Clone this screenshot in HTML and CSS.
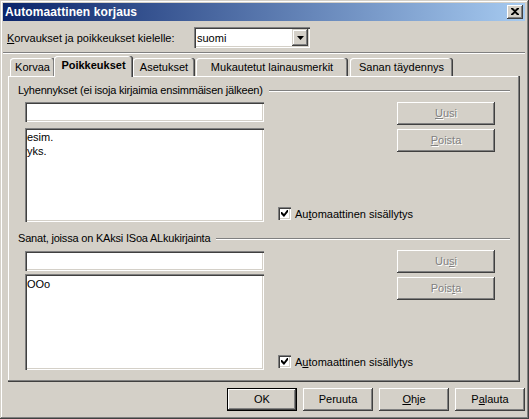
FILE: index.html
```html
<!DOCTYPE html>
<html lang="fi">
<head>
<meta charset="utf-8">
<title>Automaattinen korjaus</title>
<link rel="stylesheet" href="styles.css">
</head>
<body>
<div class="window">
  <div class="titlebar">
    <span class="title">Automaattinen korjaus</span>
    <span class="close">
      <svg width="8" height="7" viewBox="0 0 8 7"><path d="M0 0h2l2 2 2-2h2v1L5 3.5 8 6v1H6L4 5 2 7H0V6l3-2.5L0 1z" fill="#000"/></svg>
    </span>
  </div>
  <div class="langrow">
    <span class="langlabel"><u>K</u>orvaukset ja poikkeukset kielelle:</span>
    <div class="combo">
      <span class="combotext">suomi</span>
      <span class="dropbtn"><svg width="7" height="4" viewBox="0 0 7 4"><path d="M0 0h7L3.5 4z" fill="#000"/></svg></span>
    </div>
  </div>
  <div class="sep"></div>
  <div class="tabs">
    <div class="tab t-korvaa">Korvaa</div>
    <div class="tab sel t-poik">Poikkeukset</div>
    <div class="tab t-aset">Asetukset</div>
    <div class="tab t-muk">Mukautetut lainausmerkit</div>
    <div class="tab t-san">Sanan täydennys</div>
  </div>
  <div class="panel">
    <div class="group">
      <div class="ghead"><span class="gtext">Lyhennykset (ei isoja kirjaimia ensimmäisen jälkeen)</span><span class="gline"></span></div>
      <div class="gbody g1">
        <div class="lcol">
          <div class="field"></div>
          <div class="list list1"><div class="item">esim.</div><div class="item">yks.</div></div>
        </div>
        <div class="mcol">
          <div class="check"><span class="box"><svg width="7" height="7" viewBox="0 0 7 7"><path d="M0 2h1l2 2 3-4h1v2L3 7 0 4z" fill="#000"/></svg></span><span class="ctext">Au<u>t</u>omaattinen sisällytys</span></div>
        </div>
        <div class="rcol">
          <div class="btn dis"><span><u>U</u>usi</span></div>
          <div class="btn dis"><span><u>P</u>oista</span></div>
        </div>
      </div>
    </div>
    <div class="group group2">
      <div class="ghead"><span class="gtext">Sanat, joissa on KAksi ISoa ALkukirjainta</span><span class="gline"></span></div>
      <div class="gbody g2">
        <div class="lcol">
          <div class="field"></div>
          <div class="list list2"><div class="item">OOo</div></div>
        </div>
        <div class="mcol">
          <div class="check"><span class="box"><svg width="7" height="7" viewBox="0 0 7 7"><path d="M0 2h1l2 2 3-4h1v2L3 7 0 4z" fill="#000"/></svg></span><span class="ctext">A<u>u</u>tomaattinen sisällytys</span></div>
        </div>
        <div class="rcol">
          <div class="btn dis"><span>Uu<u>s</u>i</span></div>
          <div class="btn dis"><span>Pois<u>t</u>a</span></div>
        </div>
      </div>
    </div>
  </div>
  <div class="btnrow">
    <div class="btn wide def"><span>OK</span></div>
    <div class="btn wide"><span>Peruuta</span></div>
    <div class="btn wide"><span><u>O</u>hje</span></div>
    <div class="btn wide"><span>P<u>a</u>lauta</span></div>
  </div>
</div>
</body>
</html>
```

FILE: styles.css
```css
* { box-sizing: border-box; }
html, body { margin: 0; padding: 0; background: #D4D0C8; }
body {
  font-family: "Liberation Sans", Arial, sans-serif;
  font-size: 11px;
  color: #000;
}
u { text-decoration: underline; text-underline-offset: 1px; }

.window {
  width: 529px;
  height: 419px;
  background: #D4D0C8;
  padding: 3px 4px 4px 3px;
  box-shadow: inset -1px -1px #404040, inset 1px 1px #D4D0C8, inset -2px -2px #808080, inset 2px 2px #fff;
  display: flex;
  flex-direction: column;
}

.titlebar {
  height: 18px;
  flex: none;
  background: linear-gradient(to right, #0A246A, #A6CAF0);
  display: flex;
  align-items: center;
  justify-content: space-between;
  padding: 0 2px 0 2px;
}
.title {
  color: #fff;
  font-weight: bold;
  font-size: 12px;
  line-height: 14px;
  letter-spacing: 0.1px;
}
.close {
  width: 16px;
  height: 14px;
  background: #D4D0C8;
  box-shadow: inset -1px -1px #404040, inset 1px 1px #fff, inset -2px -2px #808080;
  display: flex;
  align-items: center;
  justify-content: center;
  padding: 0 1px 1px 0;
}
.close svg { display: block; }

.langrow {
  margin-top: 6px;
  height: 21px;
  flex: none;
  display: flex;
  align-items: center;
}
.langlabel {
  margin-left: 4px;
  width: 187px;
}
.combo {
  width: 116px;
  height: 21px;
  background: #fff;
  box-shadow: inset 1px 1px #808080, inset 2px 2px #404040, inset -1px -1px #fff, inset -2px -2px #D4D0C8;
  display: flex;
  align-items: center;
  justify-content: space-between;
  padding: 2px;
}
.combotext { padding-left: 1px; }
.dropbtn {
  width: 16px;
  height: 17px;
  background: #D4D0C8;
  box-shadow: inset -1px -1px #404040, inset 1px 1px #D4D0C8, inset -2px -2px #808080, inset 2px 2px #fff;
  display: flex;
  align-items: center;
  justify-content: center;
}
.dropbtn svg { display: block; }

.sep {
  margin-top: 4px;
  height: 2px;
  flex: none;
  border-top: 1px solid #808080;
  border-bottom: 1px solid #fff;
}

.tabs {
  height: 22px;
  flex: none;
  display: flex;
  align-items: flex-end;
  padding-left: 7px;
}
.tab {
  flex: none;
  height: 18px;
  background: #D4D0C8;
  border-radius: 3px 3px 0 0;
  box-shadow: inset -1px 0 #404040, inset -2px 0 #808080, inset 1px 1px #fff;
  display: flex;
  align-items: center;
  justify-content: center;
  padding-bottom: 1px;
  white-space: nowrap;
}
.tab.sel {
  height: 21px;
  margin-bottom: -1px;
  position: relative;
  z-index: 1;
  font-weight: bold;
  padding-bottom: 3px;
}
.t-korvaa { width: 45px; }
.t-poik { width: 79px; margin-left: -1px; }
.t-aset { width: 62px; margin-left: 0; }
.t-muk { width: 152px; margin-left: 1px; }
.t-san { width: 103px; margin-left: 2px; }

.panel {
  flex: none;
  margin-left: 5px;
  width: 512px;
  height: 306px;
  padding: 8px 10px 0 10px;
  box-shadow: inset -1px -1px #404040, inset -2px -2px #808080, inset 1px 1px #fff;
}

.ghead {
  height: 13px;
  line-height: 13px;
  display: flex;
  align-items: flex-start;
}
.gtext { white-space: nowrap; letter-spacing: -0.2px; }
.gline {
  flex: 1;
  margin-left: 6px;
  margin-top: 6px;
  height: 2px;
  border-top: 1px solid #808080;
  border-bottom: 1px solid #fff;
}
.group2 { margin-top: 10px; }

.gbody {
  display: flex;
  padding: 0 15px 0 7px;
}
.g1 { margin-top: 5px; }
.g2 { margin-top: 6px; }

.lcol {
  flex: none;
  width: 239px;
  display: flex;
  flex-direction: column;
}
.field {
  height: 20px;
  background: #fff;
  box-shadow: inset 1px 1px #808080, inset 2px 2px #404040, inset -1px -1px #fff, inset -2px -2px #D4D0C8;
}
.list {
  background: #fff;
  box-shadow: inset 1px 1px #808080, inset 2px 2px #404040, inset -1px -1px #fff, inset -2px -2px #D4D0C8;
  padding: 2px 2px;
}
.list1 { margin-top: 6px; height: 94px; }
.list2 { margin-top: 3px; height: 96px; padding-top: 3px; }
.item { line-height: 14px; height: 14px; }

.mcol {
  flex: 1;
  min-width: 0;
  display: flex;
  align-items: flex-end;
  padding-left: 14px;
  padding-bottom: 1px;
}
.check {
  display: flex;
  align-items: center;
  height: 15px;
}
.box {
  flex: none;
  width: 13px;
  height: 13px;
  background: #fff;
  box-shadow: inset 1px 1px #808080, inset 2px 2px #404040, inset -1px -1px #fff, inset -2px -2px #D4D0C8;
  display: flex;
  align-items: center;
  justify-content: center;
}
.box svg { display: block; }
.ctext { margin-left: 4px; white-space: nowrap; }

.rcol {
  flex: none;
  width: 98px;
  display: flex;
  flex-direction: column;
  gap: 4px;
}
.g2 .rcol { margin-top: -1px; }

.btn {
  height: 23px;
  background: #D4D0C8;
  box-shadow: inset -1px -1px #404040, inset 1px 1px #fff, inset -2px -2px #808080, inset 2px 2px #D4D0C8;
  display: flex;
  align-items: center;
  justify-content: center;
  padding-bottom: 1px;
}
.btn.dis {
  color: #808080;
  text-shadow: 1px 1px 0 #fff;
}
.btn.def {
  box-shadow: inset 0 0 0 1px #000, inset -2px -2px #404040, inset 2px 2px #fff, inset -3px -3px #808080;
}

.btnrow {
  flex: none;
  margin-top: 6px;
  display: flex;
  justify-content: flex-end;
  gap: 6px;
}
.btn.wide { width: 70px; flex: none; }
```
